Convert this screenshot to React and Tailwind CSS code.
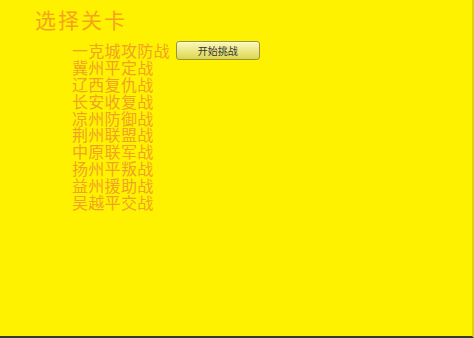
export default function App() {
  const levels = [
    "一克城攻防战",
    "冀州平定战",
    "辽西复仇战",
    "长安收复战",
    "凉州防御战",
    "荆州联盟战",
    "中原联军战",
    "扬州平叛战",
    "益州援助战",
    "吴越平交战",
  ];
  return (
    <div
      className="w-[474px] h-[338px] bg-[#fff200] border-b-2 border-b-[#3a3a2a] border-r-2 border-r-[#e0d400] overflow-hidden"
      style={{ fontFamily: '"Noto Sans CJK SC", "Noto Sans", sans-serif' }}
    >
      <div className="pl-[35px] pt-[6px] text-[21px] leading-[26px] text-[#f5a31c] tracking-[2px]">
        选择关卡
      </div>
      <div className="flex flex-col pl-[72px] pt-[10px]">
        {levels.map((name, i) => (
          <div key={name} className="flex items-center h-[16.8px]">
            <span className="text-[16px] leading-[16px] tracking-[0.3px] text-[#f0a224]">{name}</span>
            {i === 0 && (
              <button className="ml-[6px] w-[84px] h-[19px] rounded-[3px] border border-[#9a9440] bg-gradient-to-b from-[#fbf9b8] to-[#dcd64a] text-[10px] leading-[17px] text-[#333] shadow-[inset_0_1px_0_#ffffe0]">
                开始挑战
              </button>
            )}
          </div>
        ))}
      </div>
    </div>
  );
}
